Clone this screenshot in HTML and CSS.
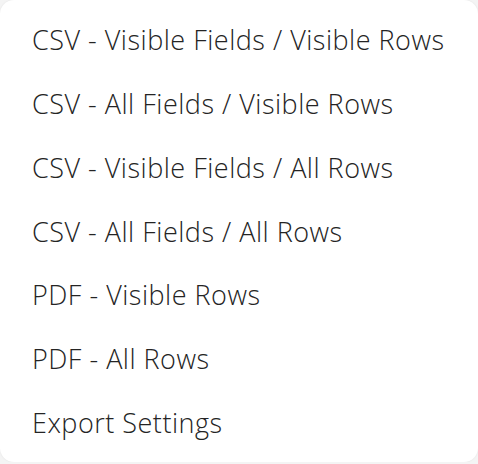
FILE: index.html
```html
<!DOCTYPE html>
<html lang="en">
<head>
    <meta charset="UTF-8">
    <meta name="viewport" content="width=device-width, initial-scale=1.0">
    <title>Export</title>
    <link rel="stylesheet" href="styles.css">
</head>
<body>
    <div class="menu">
        <div class="menu-item">CSV - Visible Fields / Visible Rows</div>
        <div class="menu-item">CSV - All Fields / Visible Rows</div>
        <div class="menu-item">CSV - Visible Fields / All Rows</div>
        <div class="menu-item">CSV - All Fields / All Rows</div>
        <div class="menu-item">PDF - Visible Rows</div>
        <div class="menu-item">PDF - All Rows</div>
        <div class="menu-item">Export Settings</div>
    </div>
</body>
</html>
```

FILE: styles.css
```css
body {
    margin: 0;
    background: #f4f4f4;
    font-family: "Open Sans", "Noto Sans", sans-serif;
}
.menu {
    width: 478px;
    height: 462px;
    box-sizing: border-box;
    padding: 8px 0;
    background: #fff;
    border-radius: 14px;
    box-shadow: 0 0 2px rgba(0, 0, 0, 0.08);
    display: flex;
    flex-direction: column;
}
.menu-item {
    height: 64px;
    display: flex;
    align-items: center;
    padding: 0 32px;
    font-size: 27px;
    font-weight: 350;
    letter-spacing: 0.5px;
    white-space: nowrap;
    color: #242424;
    cursor: pointer;
}
```
